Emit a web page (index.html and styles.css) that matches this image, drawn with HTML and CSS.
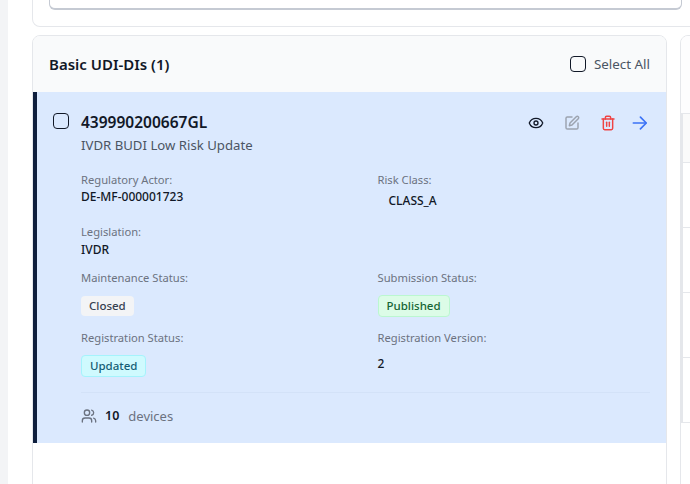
FILE: index.html
```html
<!DOCTYPE html>
<html lang="en">
<head>
<meta charset="utf-8">
<title>Basic UDI-DIs</title>
<link rel="stylesheet" href="styles.css">
</head>
<body>
<div class="page">
  <div class="rail"></div>
  <main class="main">
    <section class="search-card"><div class="search-box"></div></section>
    <div class="columns">
      <section class="list-card">
        <header class="list-head">
          <h2 class="list-title">Basic UDI-DIs (1)</h2>
          <label class="select-all"><span class="check"></span><span>Select All</span></label>
        </header>
        <article class="item">
          <div class="item-top">
            <span class="check item-check"></span>
            <div class="item-name">
              <div class="item-code">439990200667GL</div>
              <div class="item-sub">IVDR BUDI Low Risk Update</div>
            </div>
            <div class="actions">
              <svg class="icon" viewBox="0 0 24 24" fill="none" stroke="#111827" stroke-width="2" stroke-linecap="round" stroke-linejoin="round"><path d="M2.06 12.35a1 1 0 0 1 0-.7 10.75 10.75 0 0 1 19.88 0 1 1 0 0 1 0 .7 10.75 10.75 0 0 1-19.88 0"/><circle cx="12" cy="12" r="3"/></svg>
              <svg class="icon" viewBox="0 0 24 24" fill="none" stroke="#9ca3af" stroke-width="2.2" stroke-linecap="round" stroke-linejoin="round"><path d="M12 3H5a2 2 0 0 0-2 2v14a2 2 0 0 0 2 2h14a2 2 0 0 0 2-2v-7"/><path d="M18.4 2.6a2.1 2.1 0 1 1 3 3L12 15l-4 1 1-4Z"/></svg>
              <svg class="icon" viewBox="0 0 24 24" fill="none" stroke="#ef4444" stroke-width="2.2" stroke-linecap="round" stroke-linejoin="round"><path d="M3 6h18"/><path d="M19 6v14a2 2 0 0 1-2 2H7a2 2 0 0 1-2-2V6"/><path d="M8 6V4a2 2 0 0 1 2-2h4a2 2 0 0 1 2 2v2"/><path d="M10 11v6"/><path d="M14 11v6"/></svg>
              <svg class="icon-arrow" viewBox="0 0 24 24" fill="none" stroke="#3b72f6" stroke-width="2" stroke-linecap="round" stroke-linejoin="round"><path d="M4 12h15"/><path d="m12.500 5 7 7-7 7"/></svg>
            </div>
          </div>
          <div class="fields">
            <div class="field f-actor"><div class="label">Regulatory Actor:</div><div class="value actor">DE-MF-000001723</div></div>
            <div class="field f-risk"><div class="label">Risk Class:</div><div class="value risk">CLASS_A</div></div>
            <div class="field f-leg"><div class="label">Legislation:</div><div class="value">IVDR</div></div>
            <div class="field f-spacer"></div>
            <div class="field f-badge"><div class="label">Maintenance Status:</div><span class="badge gray">Closed</span></div>
            <div class="field f-badge"><div class="label">Submission Status:</div><span class="badge green">Published</span></div>
            <div class="field f-badge"><div class="label">Registration Status:</div><span class="badge cyan">Updated</span></div>
            <div class="field f-badge"><div class="label">Registration Version:</div><div class="value version">2</div></div>
          </div>
          <div class="item-foot">
            <svg class="foot-icon" viewBox="0 0 24 24" fill="none" stroke="#6b7280" stroke-width="2" stroke-linecap="round" stroke-linejoin="round"><path d="M16 21v-2a4 4 0 0 0-4-4H6a4 4 0 0 0-4 4v2"/><circle cx="9" cy="7" r="4"/><path d="M22 21v-2a4 4 0 0 0-3-3.87"/><path d="M16 3.13a4 4 0 0 1 0 7.75"/></svg>
            <span class="count">10</span>
            <span class="count-label">devices</span>
          </div>
        </article>
      </section>
      <section class="side-card">
        <div class="side-head"></div>
        <div class="side-row first"></div>
        <div class="side-row"></div>
        <div class="side-row"></div>
        <div class="side-row"></div>
        <div class="side-row"></div>
      </section>
    </div>
  </main>
</div>
</body>
</html>
```
FILE: styles.css
```css
* { box-sizing: border-box; }
html, body { margin: 0; height: 484px; overflow: hidden; background: #fff; }
body { font-family: "Noto Sans", "Open Sans", sans-serif; color: #111827; }
.page { display: flex; width: 690px; height: 484px; overflow: hidden; }
.rail { flex: 0 0 8px; background: #f3f4f6; }
.main { flex: 1 1 auto; min-width: 0; padding-left: 24px; }
.search-card { height: 27px; width: 700px; padding: 0 16px; border: 1px solid #e5e7eb; border-top: 0; border-radius: 0 0 8px 8px; }
.search-box { width: 633px; height: 10px; border: 1px solid #c5cad3; border-top: 0; border-bottom-width: 2px; border-radius: 0 0 6px 6px; }
.columns { display: flex; gap: 13px; margin-top: 8px; width: 760px; }
.list-card { flex: 0 0 635px; height: 460px; border: 1px solid #e5e7eb; border-radius: 8px 8px 0 0; overflow: hidden; background: #fff; }
.list-head { display: flex; justify-content: space-between; align-items: center; height: 56px; padding: 0 16px 0 16px; background: #f9fafb; }
.list-title { margin: 0; font-size: 15px; font-weight: 600; line-height: 20px; color: #111827; }
.select-all { display: flex; align-items: center; gap: 8px; font-size: 13.4px; line-height: 20px; color: #4b5563; }
.check { display: block; width: 16px; height: 16px; border: 1.5px solid #111827; border-radius: 4px; flex: none; }
.item { height: 351px; background: #dbe9fe; border-left: 4px solid #0f1f3d; padding: 21px 16px 0 16px; }
.item-top { display: flex; align-items: flex-start; }
.item-name { margin-left: 12px; flex: 1 1 auto; margin-top: -1px; }
.item-code { font-size: 15.5px; font-weight: 600; line-height: 20px; color: #111827; }
.item-sub { font-size: 13.2px; line-height: 20px; margin-top: 3px; color: #4b5563; }
.actions { display: flex; align-items: center; gap: 20px; height: 20px; }
.icon { width: 16px; height: 16px; display: block; }
.icon-arrow { width: 20px; height: 20px; display: block; margin-left: -6px; }
.fields { display: grid; grid-template-columns: 296.5px 1fr; margin-left: 28px; margin-top: 17px; }
.field { display: flex; flex-direction: column; align-items: flex-start; }
.f-actor, .f-risk { min-height: 52px; }
.f-leg { min-height: 46px; }
.f-spacer { min-height: 0; }
.f-badge { min-height: 60px; }
.label { font-size: 11.2px; line-height: 16px; color: #6b7280; }
.value { font-size: 12px; font-weight: 500; line-height: 16px; color: #111827; margin-top: 2px; }
.actor { margin-top: 1px; }
.risk { margin: 5px 0 0 11px; }
.version { margin-top: 10px; }
.badge { display: block; font-size: 11.5px; font-weight: 500; line-height: 16px; padding: 2px 8px; margin-top: 9px; border-radius: 4px; border: 1px solid transparent; }
.gray { background: #f3f4f6; color: #374151; border: 0; margin-top: 10px; }
.green { background: #dcfce7; color: #166534; border-color: #bbf7d0; }
.cyan { background: #cffafe; color: #155e75; border-color: #a5f3fc; }
.item-foot { display: flex; align-items: center; margin: 2px 0 0 28px; padding-bottom: 2px; border-top: 1px solid #d3e2f8; font-size: 13px; line-height: 20px; height: 49px; }
.foot-icon { width: 16px; height: 16px; }
.count { margin-left: 8px; font-size: 12.5px; font-weight: 600; color: #111827; }
.count-label { margin-left: 9px; color: #6b7280; }
.side-card { flex: 0 0 100px; height: 460px; border: 1px solid #e5e7eb; border-radius: 8px 0 0 0; overflow: hidden; }
.side-head { height: 78px; background: #fdfdfe; border-bottom: 1px solid #e5e7eb; }
.side-row { height: 65px; border-bottom: 1px solid #e5e7eb; border-left: 2px solid #e5e7eb; }
.side-row.first { height: 49px; background: #fafafa; }
```
